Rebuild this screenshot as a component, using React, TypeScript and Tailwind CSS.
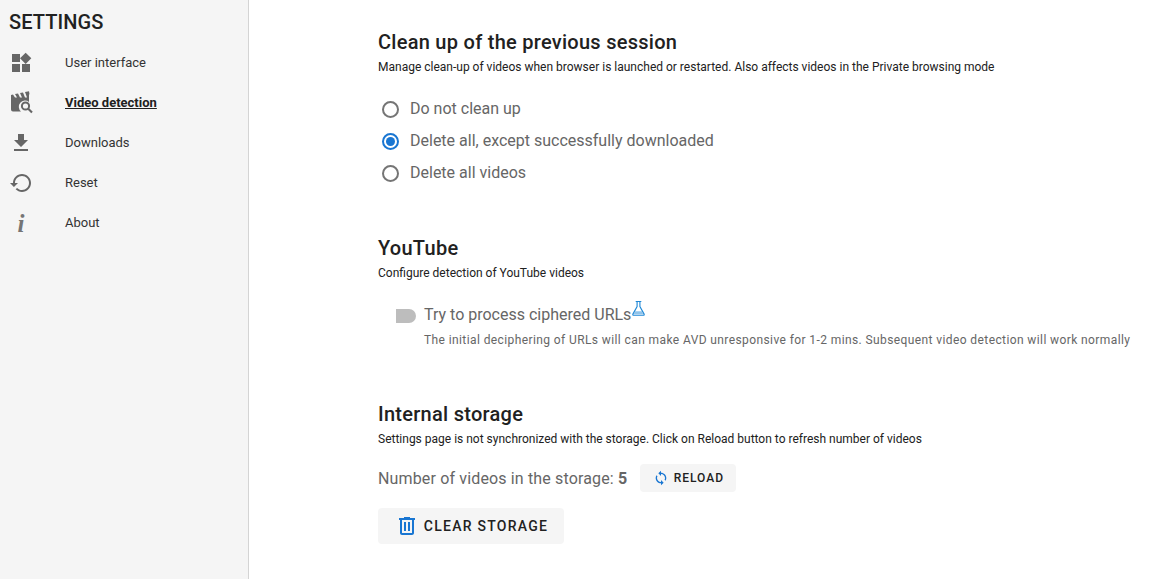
import React from "react";

const P = ({ d, cls }: { d: string; cls: string }) => (
  <svg viewBox="0 0 24 24" className={cls} fill="currentColor"><path d={d} /></svg>
);

const NavIcon = ({ name }: { name: string }) => {
  const cls = "w-6 h-6 text-[#666666]";
  if (name === "ui") return <P cls={cls} d="M13 13v8h8v-8h-8zM3 21h8v-8H3v8zM3 3v8h8V3H3zm13.66-1.31L11 7.34 16.66 13l5.66-5.66-5.66-5.65z" />;
  if (name === "video")
    return (
      <svg viewBox="0 0 24 24" className={cls} fill="currentColor">
        <path d="M2 4l2-.5 2 3h2l-2-3.4 3-.6 2 4h2l-2-4.4 3-.6 2 5h2l-2-5.4 4-.8.5 3-.5.1V11a6 6 0 0 0-8 9.5H4a2 2 0 0 1-2-2z" />
        <circle cx="16.5" cy="15" r="3.6" fill="none" stroke="currentColor" strokeWidth="2" />
        <path d="M19 17.5l4 4" stroke="currentColor" strokeWidth="2.2" fill="none" />
      </svg>
    );
  if (name === "dl") return <P cls={cls} d="M19 9h-4V3H9v6H5l7 7 7-7zM5 18v2h14v-2H5z" />;
  if (name === "reset") return <P cls={cls} d="M13 3c-4.97 0-9 4.03-9 9H1l3.89 3.89.07.14L9 12H6c0-3.87 3.13-7 7-7s7 3.13 7 7-3.13 7-7 7c-1.93 0-3.68-.79-4.94-2.06l-1.42 1.42C8.27 19.99 10.51 21 13 21c4.97 0 9-4.03 9-9s-4.03-9-9-9z" />;
  return <span className="w-6 h-6 flex items-center justify-center font-['Liberation_Serif',serif] italic font-bold text-[25px] leading-none text-[#757575]">i</span>;
};

const nav = [
  { icon: "ui", label: "User interface" },
  { icon: "video", label: "Video detection", active: true },
  { icon: "dl", label: "Downloads" },
  { icon: "reset", label: "Reset" },
  { icon: "about", label: "About" },
];

const Radio = ({ label, checked }: { label: string; checked?: boolean }) => (
  <div className="h-8 flex items-center">
    <span className="w-6 flex justify-center mr-[8px]">
      {checked ? (
        <span className="w-[17px] h-[17px] rounded-full border-2 border-[#1976d2] flex items-center justify-center">
          <span className="w-[9px] h-[9px] rounded-full bg-[#1976d2]" />
        </span>
      ) : (
        <span className="w-[17px] h-[17px] rounded-full border-2 border-[#757575]" />
      )}
    </span>
    <span className="text-base text-[#666666]">{label}</span>
  </div>
);

const Heading = ({ title, sub }: { title: string; sub: string }) => (
  <div>
    <h2 className="text-[20px] leading-[24px] font-medium tracking-[0.27px] text-[#212121]">{title}</h2>
    <p className="text-xs leading-[18px] mt-[4px] text-[#212121]">{sub}</p>
  </div>
);

export default function App() {
  return (
    <div className="flex h-[579px] w-[1152px] overflow-hidden bg-white font-['Roboto',sans-serif]">
      <aside className="w-[249px] shrink-0 bg-[#f5f5f5] border-r border-[#d4d4d4] pl-[9px] pt-[10px]">
        <h1 className="text-[20px] leading-[24px] font-medium text-[#212121] tracking-[0.1px]">SETTINGS</h1>
        <nav className="mt-[9px]">
          {nav.map((n) => (
            <div key={n.label} className="h-10 flex items-center">
              <span className="w-[56px] flex"><NavIcon name={n.icon} /></span>
              <span className={n.active ? "text-[13px] font-bold underline text-[#212121]" : "text-[13px] text-[#333333]"}>{n.label}</span>
            </div>
          ))}
        </nav>
      </aside>
      <main className="flex-1 pl-[129px] pt-[30px]">
        <Heading title="Clean up of the previous session" sub="Manage clean-up of videos when browser is launched or restarted. Also affects videos in the Private browsing mode" />
        <div className="mt-[17px]">
          <Radio label="Do not clean up" />
          <Radio label="Delete all, except successfully downloaded" checked />
          <Radio label="Delete all videos" />
        </div>

        <div className="mt-[47px]">
          <Heading title="YouTube" sub="Configure detection of YouTube videos" />
        </div>
        <div className="mt-[20px] pl-[18px] flex">
          <span className="w-[20px] h-[14px] mt-[7px] mr-[8px] rounded-l-[3px] rounded-r-full bg-[#bdbdbd]" />
          <div>
            <div className="flex h-[26px] items-center text-base text-[#666666]">
              Try to process ciphered URLs
              <svg viewBox="0 0 16 18" className="w-[15px] h-[17px] -mt-[13px] text-[#1f88d6]" fill="none" stroke="currentColor" strokeWidth="1.2">
                <path d="M5 1.5h6M6.5 1.5v5.5L2 15a.8.8 0 0 0 .7 1.2h10.6A.8.8 0 0 0 14 15L9.5 7V1.5" />
                <path d="M4.5 12h7l1.6 3.2H2.9z" fill="currentColor" fillOpacity="0.5" stroke="none" />
              </svg>
            </div>
            <p className="text-xs leading-[18px] mt-[3px] text-[#666666] tracking-[0.4px] whitespace-nowrap">
              The initial deciphering of URLs will can make AVD unresponsive for 1-2 mins. Subsequent video detection will work normally
            </p>
          </div>
        </div>

        <div className="mt-[53px]">
          <Heading title="Internal storage" sub="Settings page is not synchronized with the storage. Click on Reload button to refresh number of videos" />
        </div>
        <div className="mt-[16px] flex items-center">
          <span className="text-base text-[#666666] tracking-[0.15px]">Number of videos in the storage: <b className="font-bold">5</b></span>
          <button className="ml-[13px] mb-[2px] h-[28px] w-[96px] rounded bg-[#f5f5f5] flex items-center justify-center gap-[5px] text-xs font-medium tracking-[1px] text-[#212121]">
            <P cls="w-[16px] h-[16px] text-[#1976d2]" d="M12 4V1L8 5l4 4V6c3.31 0 6 2.69 6 6 0 1.01-.25 1.97-.7 2.8l1.46 1.46C19.54 15.03 20 13.57 20 12c0-4.42-3.58-8-8-8zm0 14c-3.31 0-6-2.69-6-6 0-1.01.25-1.97.7-2.8L5.24 7.74C4.46 8.97 4 10.43 4 12c0 4.42 3.58 8 8 8v3l4-4-4-4v3z" />
            RELOAD
          </button>
        </div>
        <button className="mt-[14px] h-[36px] w-[186px] rounded bg-[#f5f5f5] flex items-center justify-center gap-[5px] pl-[1px] text-sm font-medium tracking-[1.25px] text-[#212121]">
          <P cls="w-[24px] h-[24px] text-[#1976d2]" d="M15 4V3H9v1H4v2h1v13c0 1.1.9 2 2 2h10c1.1 0 2-.9 2-2V6h1V4h-5zm2 15H7V6h10v13zM9 8h2v9H9zm4 0h2v9h-2z" />
          CLEAR STORAGE
        </button>
      </main>
    </div>
  );
}
